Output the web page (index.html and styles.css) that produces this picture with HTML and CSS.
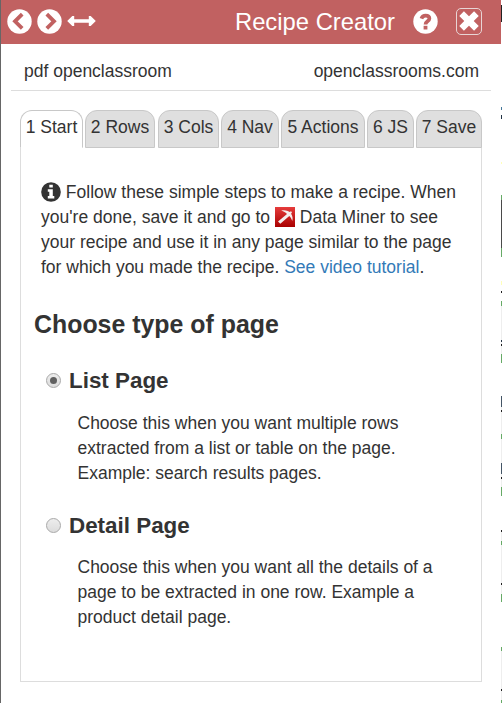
FILE: index.html
```html
<!DOCTYPE html>
<html lang="en">
<head>
<meta charset="utf-8">
<title>Recipe Creator</title>
<link rel="stylesheet" href="styles.css">
</head>
<body>
<div class="window">
<main class="panel">
  <header class="topbar">
    <svg class="nav-icon" viewBox="0 0 25 25"><circle cx="12.5" cy="12.5" r="12.2" fill="#fff"/><path d="M15.2 5.2 8 12.3l7.2 7.1" fill="none" stroke="#c16161" stroke-width="3.8"/></svg>
    <svg class="nav-icon" viewBox="0 0 25 25"><circle cx="12.5" cy="12.5" r="12.2" fill="#fff"/><path d="m9.8 5.2 7.2 7.1-7.2 7.1" fill="none" stroke="#c16161" stroke-width="3.8"/></svg>
    <svg class="arrows" viewBox="0 0 29 12"><path d="M.2 6 5.3.9h1.9v3.3h14.6V.9h1.9L28.8 6l-5.1 5.1h-1.9V7.8H7.2v3.3H5.3z" fill="#fff"/></svg>
    <h1 class="title">Recipe Creator</h1>
    <svg class="help" viewBox="0 0 25 25"><circle cx="12.5" cy="12.5" r="12.2" fill="#fff"/><path d="M8.4 9.6c.8-2 2.1-2.9 4.1-2.9 2.4 0 3.9 1.2 3.9 2.9 0 2.7-3.9 2.8-3.9 5.8" fill="none" stroke="#c16161" stroke-width="3.7"/><path d="M10.6 16.8h3.8v3.7h-3.8z" fill="#c16161"/></svg>
    <button class="close" aria-label="Close"><svg viewBox="0 0 20 20"><path d="m2.6 2.6 14.8 14.8m0-14.8L2.6 17.4" stroke="#fff" stroke-width="6.6"/></svg></button>
  </header>
  <div class="subject"><span>pdf openclassroom</span><span>openclassrooms.com</span></div>
  <nav class="tabs">
    <a class="tab start active">1 Start</a><a class="tab rows">2 Rows</a><a class="tab cols">3 Cols</a><a class="tab navi">4 Nav</a><a class="tab actions">5 Actions</a><a class="tab js">6 JS</a><a class="tab save">7 Save</a>
  </nav>
  <section class="content">
    <p class="intro"><svg class="info" viewBox="0 0 20 20"><circle cx="10" cy="10" r="9.8" fill="#333"/><path d="M8.3 2.8h3.5v2.8H8.3zM6.8 7.3h5v6.8h1.5v2.4H6.8v-2.4h1.5V9.7H6.8z" fill="#fff"/></svg> Follow these simple steps to make a recipe. When<br>you're done, save it and go to <svg class="miner" viewBox="0 0 20 20"><defs><linearGradient id="red" x2="0" y2="1"><stop stop-color="#e63c3c"/><stop offset="1" stop-color="#a90000"/></linearGradient></defs><rect width="20" height="20" fill="url(#red)"/><path d="M6.2 3.6c4-.9 6 .1 8.4 1.3l1.4-.7 1 1-.9 1.5c1.5 2.5 1.9 4.2 1.2 7.2-.9-2.4-1.7-3.7-3-5L5.3 16.7 3 14.6 12 7c-1.7-1.7-3.1-2.5-5.8-3.4z" fill="#f5eded"/></svg> Data Miner to see<br>your recipe and use it in any page similar to the page<br>for which you made the recipe. <a class="link">See video tutorial</a>.</p>
    <h2 class="heading">Choose type of page</h2>
    <label class="option"><span class="radio checked"></span><span class="option-name">List Page</span></label>
    <p class="description list">Choose this when you want multiple rows<br>extracted from a list or table on the page.<br>Example: search results pages.</p>
    <label class="option"><span class="radio"></span><span class="option-name">Detail Page</span></label>
    <p class="description">Choose this when you want all the details of a<br>page to be extracted in one row. Example a<br>product detail page.</p>
  </section>
</main>
<div class="page-edge"></div>
</div>
</body>
</html>
```
FILE: styles.css
```css
* { box-sizing: border-box; }
body {
  margin: 0;
  font: 17.5px/25px "Liberation Sans", Arial, sans-serif;
  color: #333;
  background: #fff;
}
p, h1, h2 { margin: 0; }
.window { display: flex; width: 502px; height: 703px; overflow: hidden; }
.panel { width: 501px; height: 703px; border-left: 1px solid #666; background: #fff; }
.topbar {
  display: flex;
  align-items: center;
  height: 44px;
  padding: 0 15px 2px 6px;
  background: #c16161;
  color: #fff;
}
.nav-icon { width: 25px; height: 25px; margin-right: 5px; flex: none; }
.arrows { width: 29px; height: 12px; flex: none; }
.title { margin: 2px 0 0 auto; font-size: 23.8px; line-height: 30px; font-weight: 400; white-space: nowrap; }
.help { width: 25px; height: 25px; margin: 0 18px; flex: none; }
.close {
  display: flex;
  align-items: center;
  justify-content: center;
  width: 26px;
  height: 27px;
  margin-right: 4px;
  padding: 0;
  border: 1px solid #e8d5d5;
  border-radius: 5px;
  background: none;
}
.close svg { width: 20px; height: 20px; flex: none; }
.subject {
  display: flex;
  justify-content: space-between;
  height: 47px;
  margin: 0 10px;
  padding: 15px 12px 0 13px;
  border-bottom: 1px solid #ddd;
}
.tabs { display: flex; gap: 2px; margin: 19px 0 0 19px; height: 38px; }
.tab {
  height: 38px;
  padding-top: 4px;
  border: 1px solid #c8c8c8;
  border-radius: 12px 12px 0 0;
  background: #dfdfdf;
  text-align: center;
  white-space: nowrap;
}
.active { background: #fff; border-bottom-color: #fff; }
.start { width: 63px; }
.rows { width: 70px; }
.cols { width: 61px; margin-left: 1px; }
.navi { width: 58px; }
.actions { width: 84px; }
.js { width: 47px; }
.save { width: 66px; }
.content {
  width: 462px;
  height: 535px;
  margin: -1px 0 0 19px;
  padding: 33px 12px 0;
  border: 1px solid #ddd;
  border-top: 0;
}
.intro { padding-left: 8px; white-space: nowrap; }
.info, .miner { width: 20px; height: 20px; vertical-align: -4px; }
.link { color: #337ab7; }
.heading { margin: 28px 0 27px 1px; font-size: 24.9px; line-height: 32px; }
.option { display: flex; align-items: center; height: 27px; padding-left: 13px; }
.radio {
  display: flex;
  align-items: center;
  justify-content: center;
  width: 15px;
  height: 15px;
  margin-right: 8px;
  border: 1px solid #a9a9a9;
  border-radius: 50%;
  background: linear-gradient(#ededed, #dcdcdc);
}
.checked::after { content: ""; width: 7px; height: 7px; border-radius: 50%; background: #606060; }
.option-name { font-size: 22.4px; line-height: 27px; font-weight: 700; }
.description { margin: 16px 0 0; padding-left: 44.5px; white-space: nowrap; }
.list { margin: 17px 0 26px; }
.page-edge {
  width: 1px;
  height: 703px;
  background: linear-gradient(#fff 5px, #222 5px 22px, #fff 22px 107px, #479 107px 110px, #fff 110px 115px, #234 115px 119px, #fff 119px 162px, #ffb 162px 164px, #fff 164px 195px, #6a6 195px 200px, #4a4a4a 200px 248px, #6a6 248px 257px, #fff 257px 281px, #ffb 281px 285px, #fff 285px 291px, #222 291px 293px, #fff 293px 301px, #6a6 301px 306px, #eee 306px 340px, #234 340px 342px, #eee 342px 344px, #222 344px 346px, #eee 346px 354px, #6a6 354px 363px, #fff 363px 396px, #456 396px 407px, #eee 407px 410px, #222 410px 412px, #eee 412px 434px, #6a6 434px 439px, #eee 439px 463px, #456 463px 474px, #eee 474px 477px, #222 477px 479px, #eee 479px 487px, #6a6 487px 496px, #fff 496px 530px, #222 530px 532px, #eee 532px 541px, #6a6 541px 545px, #eee 545px 583px, #222 583px 585px, #eee 585px 594px, #6a6 594px 602px, #fff 602px 647px, #6a6 647px 651px, #eee 651px 689px, #222 689px 691px, #eee 691px 700px, #6a6 700px);
}
```
